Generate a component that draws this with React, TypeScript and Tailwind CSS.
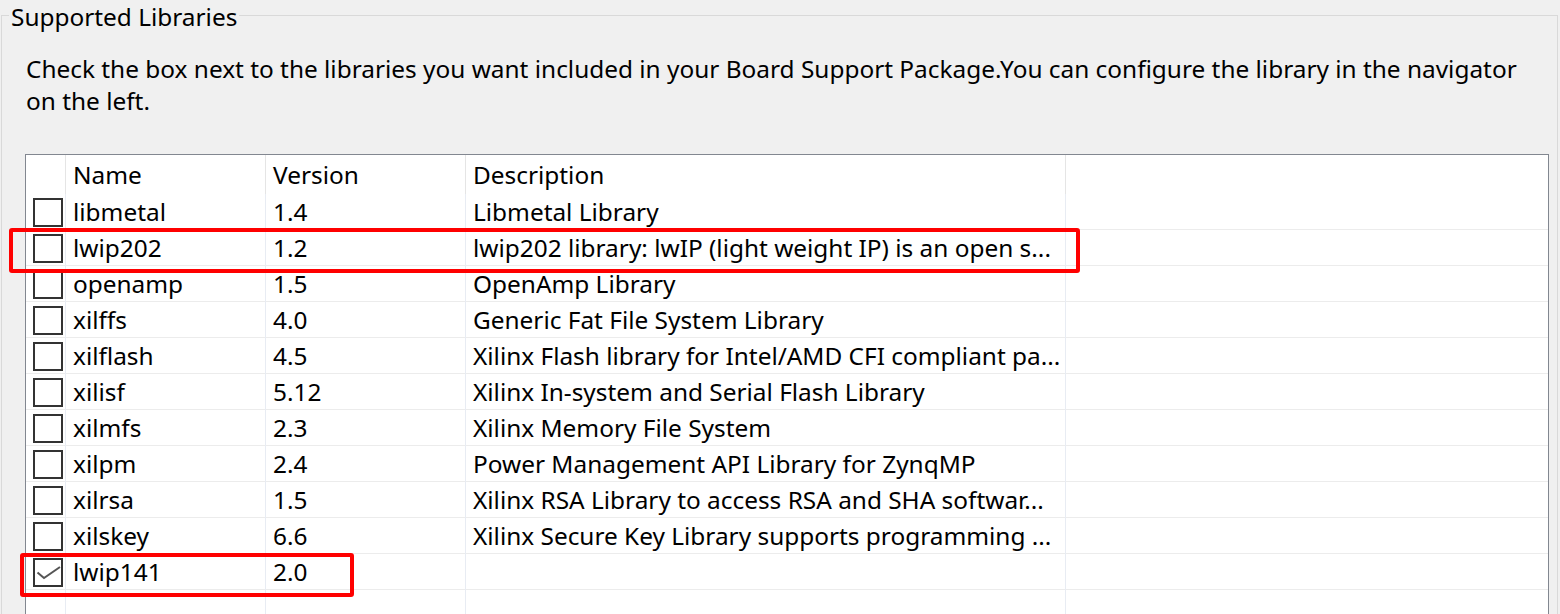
import React from "react";

interface Lib {
  name: string;
  version: string;
  description: string;
  checked?: boolean;
}

const LIBS: Lib[] = [
  { name: "libmetal", version: "1.4", description: "Libmetal Library" },
  { name: "lwip202", version: "1.2", description: "lwip202 library: lwIP (light weight IP) is an open s..." },
  { name: "openamp", version: "1.5", description: "OpenAmp Library" },
  { name: "xilffs", version: "4.0", description: "Generic Fat File System Library" },
  { name: "xilflash", version: "4.5", description: "Xilinx Flash library for Intel/AMD CFI compliant pa..." },
  { name: "xilisf", version: "5.12", description: "Xilinx In-system and Serial Flash Library" },
  { name: "xilmfs", version: "2.3", description: "Xilinx Memory File System" },
  { name: "xilpm", version: "2.4", description: "Power Management API Library for ZynqMP" },
  { name: "xilrsa", version: "1.5", description: "Xilinx RSA Library to access RSA and SHA softwar..." },
  { name: "xilskey", version: "6.6", description: "Xilinx Secure Key Library supports programming ..." },
  { name: "lwip141", version: "2.0", description: "", checked: true },
];

const COLS = "grid grid-cols-[40px_200px_200px_600px_1fr]";

function Checkbox({ checked }: { checked?: boolean }) {
  return (
    <div className="w-[30px] h-[29px] border-2 border-[#333333] bg-white flex items-center justify-center">
      {checked && (
        <svg width="26" height="25" viewBox="0 0 26 25" fill="none">
          <polyline points="2.5,12.5 9,18 25,7" stroke="#555555" strokeWidth="2" />
        </svg>
      )}
    </div>
  );
}

function Row({ lib }: { lib?: Lib }) {
  return (
    <div className={`${COLS} h-[36px] border-b border-[#ececec]`}>
      <div className="flex items-center pl-[7px] border-r border-[#e8ecf3]">
        {lib && <Checkbox checked={lib.checked} />}
      </div>
      <div className="flex items-center pl-[7px] border-r border-[#e8ecf3]">{lib?.name}</div>
      <div className="flex items-center pl-[7px] border-r border-[#e8ecf3]">{lib?.version}</div>
      <div className="flex items-center pl-[7px] border-r border-[#e8ecf3] whitespace-nowrap overflow-hidden">
        {lib?.description}
      </div>
      <div />
    </div>
  );
}

export default function App() {
  return (
    <div
      className="relative w-[1560px] h-[614px] overflow-hidden bg-[#f0f0f0] text-black text-[24.4px]"
      style={{ fontFamily: '"Noto Sans", "Open Sans", sans-serif' }}
    >
      <div className="pt-[15px] pl-[1px] pr-[2px]">
        <div className="relative border-t border-l border-r border-[#d9d9d9] h-[620px]">
          <span className="absolute left-[7px] -top-[14px] px-[2px] bg-[#f0f0f0] leading-[30px]">
            Supported Libraries
          </span>

          <p className="pt-[37px] pl-[24px] leading-[32px] whitespace-nowrap">
            Check the box next to the libraries you want included in your Board Support Package.You can configure the library in the navigator
            <br />
            on the left.
          </p>

          <div className="mt-[37px] ml-[23px] w-[1524px] bg-white border-t border-l border-r border-[#828790] h-[480px]">
            <div className={`${COLS} h-[39px]`}>
              <div className="border-r border-[#e5e5e5]" />
              <div className="flex items-center pl-[7px] pt-[2px] border-r border-[#e5e5e5]">Name</div>
              <div className="flex items-center pl-[7px] pt-[2px] border-r border-[#e5e5e5]">Version</div>
              <div className="flex items-center pl-[7px] pt-[2px] border-r border-[#e5e5e5]">Description</div>
              <div />
            </div>
            {LIBS.map((lib) => (
              <Row key={lib.name} lib={lib} />
            ))}
            <Row />
          </div>
        </div>
      </div>

      {/* annotation boxes */}
      <div className="absolute left-[9px] top-[228px] w-[1071px] h-[45px] border-4 border-[#ff0000] rounded-[3px]" />
      <div className="absolute left-[20px] top-[553px] w-[334px] h-[44px] border-4 border-[#ff0000] rounded-[3px]" />
    </div>
  );
}
